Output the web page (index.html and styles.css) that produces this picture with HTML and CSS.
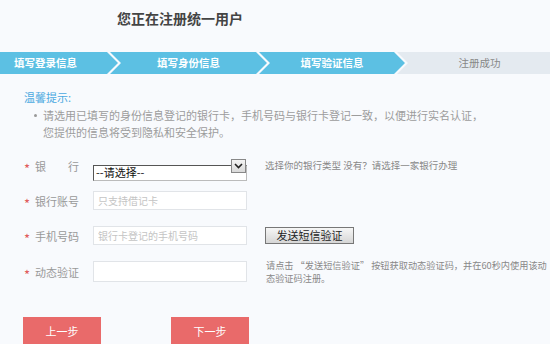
FILE: index.html
```html
<!DOCTYPE html>
<html>
<head>
    <title>注册统一用户</title>
    <meta charset="utf-8">
    <link rel="stylesheet" href="styles.css">
</head>
<body>
    <div class="page">
        <h1 class="title">您正在注册统一用户</h1>

        <div class="steps">
            <div class="step step-first done">填写登录信息</div>
            <div class="step done">填写身份信息</div>
            <div class="step done">填写验证信息</div>
            <div class="step step-last">注册成功</div>
        </div>

        <div class="tips">
            <div class="tips-title">温馨提示:</div>
            <ul>
                <li>请选用已填写的身份信息登记的银行卡，手机号码与银行卡登记一致，以便进行实名认证，<br>您提供的信息将受到隐私和安全保护。</li>
            </ul>
        </div>

        <div class="form">
            <div class="row">
                <label class="label"><span class="star">*</span><span class="name">银行</span></label>
                <span class="select-wrap">
                    <select class="select">
                        <option>--请选择--</option>
                    </select>
                    <span class="select-btn">
                        <svg width="9" height="6" viewBox="0 0 9 6"><path d="M1 1 L4.5 4.5 L8 1" fill="none" stroke="#222" stroke-width="1.6"/></svg>
                    </span>
                </span>
                <span class="hint">选择你的银行类型 没有？请选择一家银行办理</span>
            </div>
            <div class="row">
                <label class="label"><span class="star">*</span><span class="name">银行账号</span></label>
                <input class="input" type="text" placeholder="只支持借记卡">
            </div>
            <div class="row">
                <label class="label"><span class="star">*</span><span class="name">手机号码</span></label>
                <input class="input" type="text" placeholder="银行卡登记的手机号码">
                <button class="send-btn" type="button">发送短信验证</button>
            </div>
            <div class="row row-top">
                <label class="label"><span class="star">*</span><span class="name">动态验证</span></label>
                <input class="input input-tall" type="text">
                <span class="hint hint-wide">请点击 “发送短信验证” 按钮获取动态验证码，并在60秒内使用该动态验证码注册。</span>
            </div>
        </div>

        <div class="actions">
            <button class="btn" type="button">上一步</button>
            <button class="btn" type="button">下一步</button>
        </div>
    </div>
</body>
</html>
```

FILE: styles.css
```css
body {
    margin: 0;
    background: #f8fafd;
    font-family: "Noto Sans CJK SC", "Noto Sans", sans-serif;
    overflow: hidden;
}
.page { width: 550px; }
.title {
    margin: 0;
    padding: 8px 0 0 117px;
    height: 44px;
    font-size: 14px;
    line-height: 20px;
    font-weight: bold;
    color: #444;
}

/* step bar */
.steps {
    display: flex;
    height: 22px;
}
.step {
    flex: none;
    height: 22px;
    line-height: 22px;
    font-size: 10.5px;
    text-align: center;
    color: #888;
    background: #e4eaf0;
    margin-left: -8px;
    clip-path: polygon(0 0, calc(100% - 11px) 0, 100% 50%, calc(100% - 11px) 100%, 0 100%, 11px 50%);
}
.step:nth-child(2) { width: 157px; }
.step:nth-child(3) { width: 146px; }
.step.done {
    background: #5cc0e3;
    color: #fff;
    font-weight: bold;
}
.step-first {
    width: 118px;
    margin-left: 0;
    text-align: left;
    padding-left: 14px;
    box-sizing: border-box;
    clip-path: polygon(0 0, calc(100% - 11px) 0, 100% 50%, calc(100% - 11px) 100%, 0 100%);
}
.step-last {
    width: 161px;
    padding-left: 4px;
    box-sizing: border-box;
    clip-path: polygon(0 0, 100% 0, 100% 100%, 0 100%, 11px 50%);
}

/* tips */
.tips {
    padding: 16px 0 0 24px;
    height: 72px;
    box-sizing: border-box;
}
.tips-title {
    font-size: 11px;
    line-height: 15px;
    color: #4aa9e0;
}
.tips ul {
    margin: 2px 0 0;
    padding: 0 0 0 19px;
    font-size: 11px;
    line-height: 17px;
    color: #9c9c9c;
    list-style: none;
}
.tips li { position: relative; }
.tips li::before {
    content: "";
    position: absolute;
    left: -9px;
    top: 7px;
    width: 3px;
    height: 3px;
    border-radius: 50%;
    background: #999;
}

/* form */
.form {
    padding: 2px 0 0 24px;
}
.row {
    display: flex;
    align-items: center;
    height: 35px;
}
.row-top {
    align-items: flex-start;
    padding-top: 8px;
    box-sizing: border-box;
    height: 48px;
}
.label {
    display: flex;
    align-items: center;
    width: 69px;
    flex: none;
    font-size: 11px;
    color: #999;
}
.row-top .label { height: 21px; }
.star {
    color: #e05a5a;
    width: 11px;
    font-size: 13px;
    line-height: 13px;
    padding-top: 5px;
}
.name {
    width: 44px;
    text-align-last: justify;
}
.input {
    flex: none;
    width: 154px;
    height: 19px;
    box-sizing: border-box;
    border: 1px solid #e1e4e8;
    background: #fff;
    padding: 0 4px;
    font-family: inherit;
    font-size: 10px;
    color: #333;
    outline: none;
}
.input::placeholder { color: #c4c4c4; }
.input-tall { height: 21px; }
.select-wrap {
    position: relative;
    flex: none;
    width: 154px;
    height: 16px;
}
.select {
    appearance: none;
    width: 100%;
    height: 16px;
    margin: 0;
    padding: 0 2px 1px;
    box-sizing: border-box;
    border: 1px solid #777;
    border-color: #555 #bbb #bbb #555;
    background: #fff;
    font-family: inherit;
    font-size: 11px;
    line-height: 13px;
    color: #111;
    border-radius: 0;
}
.select-btn {
    position: absolute;
    right: 1px;
    top: 1px;
    width: 15px;
    height: 14px;
    box-sizing: border-box;
    border: 1px solid #888;
    background: linear-gradient(#f4f4f4, #d9d9d9);
    display: flex;
    align-items: center;
    justify-content: center;
}
.hint {
    margin-left: 18px;
    font-size: 9.5px;
    color: #888;
    line-height: 13px;
}
.hint-wide {
    flex: none;
    width: 284px;
    margin-left: 19px;
    margin-top: -2px;
    font-size: 9.2px;
}
.send-btn {
    margin-left: 18px;
    width: 89px;
    height: 17px;
    padding: 0;
    border: 1px solid #777;
    background: linear-gradient(#f6f6f6, #d6d6d6);
    font-family: inherit;
    font-size: 11px;
    line-height: 15px;
    color: #222;
}

/* buttons */
.actions {
    display: flex;
    gap: 70px;
    padding: 16px 0 0 23px;
}
.btn {
    width: 78px;
    height: 28px;
    border: 0;
    background: #e96a6a;
    color: #fff;
    font-family: inherit;
    font-size: 11px;
}
```
